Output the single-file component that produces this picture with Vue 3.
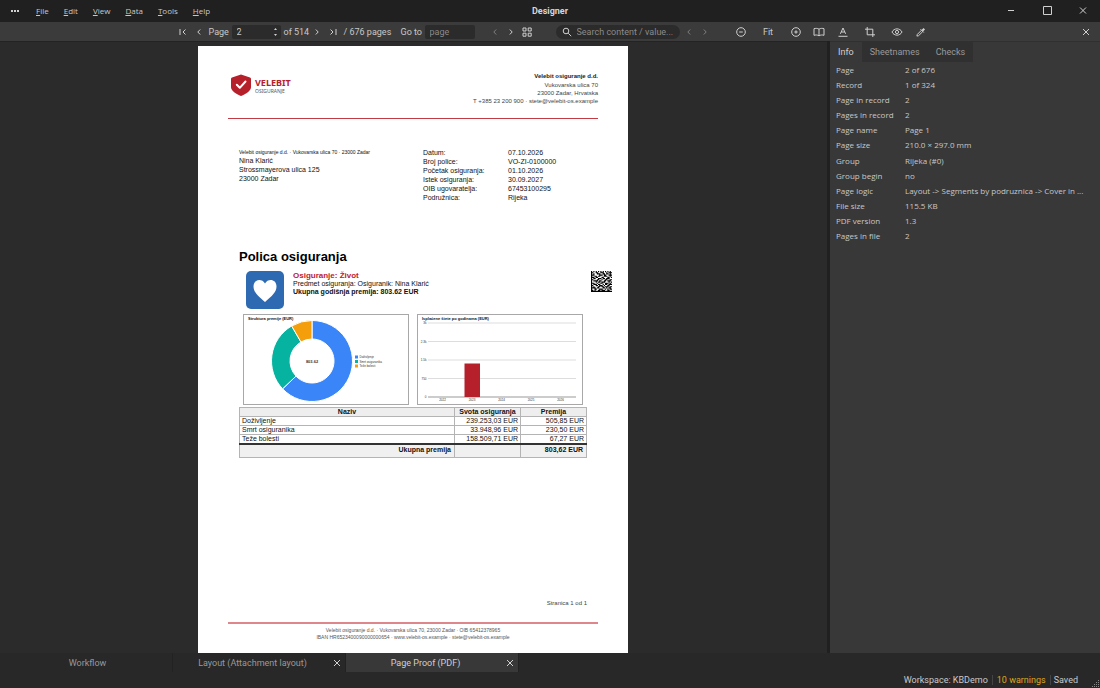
<script setup>
import { ref } from 'vue'

const menus = ['File', 'Edit', 'View', 'Data', 'Tools', 'Help']
const page = ref('2')
const goto = ref('')
const query = ref('')

const sideTabs = ['Info', 'Sheetnames', 'Checks']
const info = [
  ['Page', '2 of 676'],
  ['Record', '1 of 324'],
  ['Page in record', '2'],
  ['Pages in record', '2'],
  ['Page name', 'Page 1'],
  ['Page size', '210.0 × 297.0 mm'],
  ['Group', 'Rijeka (#0)'],
  ['Group begin', 'no'],
  ['Page logic', 'Layout -> Segments by podruznica -> Cover in ...'],
  ['File size', '115.5 KB'],
  ['PDF version', '1.3'],
  ['Pages in file', '2'],
]

const details = [
  ['Datum:', '07.10.2026'],
  ['Broj police:', 'VO-ZI-0100000'],
  ['Početak osiguranja:', '01.10.2026'],
  ['Istek osiguranja:', '30.09.2027'],
  ['OIB ugovaratelja:', '67453100295'],
  ['Podružnica:', 'Rijeka'],
]

const items = [
  ['Doživljenje', '239.253,03 EUR', '505,85 EUR'],
  ['Smrt osiguranika', '33.948,96 EUR', '230,50 EUR'],
  ['Teže bolesti', '158.509,71 EUR', '67,27 EUR'],
]

const parts = [
  { label: 'Doživljenje', value: 505.85, color: '#3a86f8' },
  { label: 'Smrt osiguranika', value: 230.5, color: '#06b2a0' },
  { label: 'Teže bolesti', value: 67.27, color: '#f59e0b' },
]
const total = parts.reduce((s, p) => s + p.value, 0)
let turn = 0
const slices = parts.map((p) => {
  const a = turn * 2 * Math.PI
  turn += p.value / total
  const b = turn * 2 * Math.PI
  const pt = (r, t) => `${(69 + r * Math.sin(t)).toFixed(2)} ${(47 - r * Math.cos(t)).toFixed(2)}`
  const large = b - a > Math.PI ? 1 : 0
  return {
    color: p.color,
    d: `M${pt(40.5, a)}A40.5 40.5 0 ${large} 1 ${pt(40.5, b)}L${pt(22, b)}A22 22 0 ${large} 0 ${pt(22, a)}Z`,
  }
})

const yTicks = ['3k', '2.3k', '1.5k', '750', '0']
const years = ['2022', '2023', '2024', '2025', '2026']

const code = [
  '101010101010101010',
  '110011001110010111',
  '101001110011011010',
  '111000011101100111',
  '100110110001110010',
  '111011000110001101',
  '101100111011011100',
  '110001100100110011',
  '101111011001101110',
  '100010110111000101',
  '111001001100111010',
  '101110110010110111',
  '110011011101001100',
  '101000110110111011',
  '111101100011010110',
  '100110011100101011',
  '110100110111001100',
  '111111111111111111',
]
const modules = code
  .flatMap((row, y) => [...row].map((c, x) => (c === '1' ? `M${x} ${y}h1v1h-1z` : '')))
  .join('')
</script>

<template>
  <div class="app">
    <header class="titlebar">
      <nav class="menu">
        <button class="dots" aria-label="More">
          <svg width="10" height="4" viewBox="0 0 10 4"><path d="M1 1h2v2H1zM4 1h2v2H4zM7 1h2v2H7z" fill="#d0d0d0" /></svg>
        </button>
        <button v-for="m in menus" :key="m"><u>{{ m[0] }}</u>{{ m.slice(1) }}</button>
      </nav>
      <h1>Designer</h1>
      <div class="winbtns">
        <button aria-label="Minimize"><svg width="10" height="10" viewBox="0 0 10 10"><path d="M2 4.500h6" /></svg></button>
        <button aria-label="Maximize"><svg width="10" height="10" viewBox="0 0 10 10"><path d="M1.500 0.500h8v8h-8z" /></svg></button>
        <button aria-label="Close"><svg width="10" height="10" viewBox="0 0 10 10"><path d="M2 1.500l6 6M8 1.500L2 7.500" /></svg></button>
      </div>
    </header>

    <div class="toolbar">
      <div class="tools">
        <div class="group pager">
          <button class="ib" aria-label="First page"><svg class="ic" viewBox="0 0 12 12"><path d="M3 3v6M8.500 3.500L6 6l2.500 2.500" /></svg></button>
          <button class="ib" aria-label="Previous page"><svg class="ic" viewBox="0 0 12 12"><path d="M7.200 3.500L4.800 6l2.400 2.500" /></svg></button>
          <label for="page" class="w-page">Page</label>
          <div class="spin">
            <input id="page" v-model="page" type="text" />
            <div class="arrows">
              <button aria-label="Up"><svg width="5" height="4" viewBox="0 0 5 4"><path d="M1 3L2.500 1L4 3z" /></svg></button>
              <button aria-label="Down"><svg width="5" height="4" viewBox="0 0 5 4"><path d="M1 1L2.500 3L4 1z" /></svg></button>
            </div>
          </div>
          <span class="w-of">of 514</span>
          <button class="ib" aria-label="Next page"><svg class="ic" viewBox="0 0 12 12"><path d="M4.800 3.500L7.200 6 4.800 8.500" /></svg></button>
          <button class="ib" aria-label="Last page"><svg class="ic" viewBox="0 0 12 12"><path d="M9 3v6M3.500 3.500L6 6 3.500 8.500" /></svg></button>
          <span class="w-pages">/ 676 pages</span>
        </div>
        <div class="group goto">
          <label for="goto">Go to</label>
          <input id="goto" v-model="goto" type="text" placeholder="page" />
        </div>
        <div class="group">
          <button class="ib dim" aria-label="Back"><svg class="ic" viewBox="0 0 12 12"><path d="M7.200 3.500L4.800 6l2.400 2.500" /></svg></button>
          <button class="ib" aria-label="Forward"><svg class="ic" viewBox="0 0 12 12"><path d="M4.800 3.500L7.200 6 4.800 8.500" /></svg></button>
          <button class="ib" aria-label="Thumbnails"><svg class="ic" viewBox="0 0 12 12"><path d="M2 2h3v3H2zM7.200 2h3v3h-3zM2 7.200h3v3H2zM7.200 7.200h3v3h-3z" /></svg></button>
        </div>
        <div class="group find">
          <div class="search">
            <svg class="ic" viewBox="0 0 12 12"><circle cx="5" cy="5" r="2.800" /><path d="M7.200 7.200L10.200 10.200" /></svg>
            <input v-model="query" type="text" aria-label="Search" placeholder="Search content / value..." />
          </div>
          <button class="ib dim" aria-label="Previous match"><svg class="ic" viewBox="0 0 12 12"><path d="M7.200 3.500L4.800 6l2.400 2.500" /></svg></button>
          <button class="ib dim" aria-label="Next match"><svg class="ic" viewBox="0 0 12 12"><path d="M4.800 3.500L7.200 6 4.800 8.500" /></svg></button>
        </div>
        <div class="group zoom">
          <button class="ib" aria-label="Zoom out"><svg class="ic" viewBox="0 0 12 12"><circle cx="6" cy="6" r="4.300" /><path d="M4.200 6h3.600" /></svg></button>
          <button class="fit">Fit</button>
          <button class="ib" aria-label="Zoom in"><svg class="ic" viewBox="0 0 12 12"><circle cx="6" cy="6" r="4.300" /><path d="M4.300 6h3.400M6 4.300v3.400" /></svg></button>
        </div>
        <div class="group modes">
          <button class="ib" aria-label="Facing pages"><svg class="ic" viewBox="0 0 12 12"><path d="M6 3.200C4.500 2.200 2.500 2.200 1 2.700v6.600c1.500-.5 3.500-.5 5 .5 1.500-1 3.500-1 5-.5V2.700c-1.500-.5-3.500-.5-5 .5v6.600" /></svg></button>
          <button class="ib" aria-label="Text colour"><svg class="ic" viewBox="0 0 12 12"><path d="M3.400 7.800L6 2l2.600 5.800M4.300 6h3.400M1.500 10.300h9" /></svg></button>
        </div>
        <div class="group marks">
          <button class="ib" aria-label="Crop"><svg class="ic" viewBox="0 0 12 12"><path d="M3.200 1v7.800H11M1 3.200h7.800V11" /></svg></button>
          <button class="ib" aria-label="Preview"><svg class="ic" viewBox="0 0 12 12"><path d="M1 6c2-4.200 8-4.200 10 0-2 4.200-8 4.200-10 0z" /><circle cx="6" cy="6" r="1.600" /></svg></button>
        </div>
        <button class="ib" aria-label="Pick colour"><svg class="ic" viewBox="0 0 12 12"><path d="M6.500 4.200L2.300 8.400 1.900 10.100 3.600 9.700 7.800 5.500" /><path d="M5.500 3.200l3.300 3.300" /><path d="M7.300 4.700l2-2" class="thick" /></svg></button>
      </div>
      <button class="ib close" aria-label="Close proof"><svg width="10" height="10" viewBox="0 0 10 10"><path d="M2 2l6 6M8 2L2 8" /></svg></button>
    </div>

    <main class="work">
      <section class="canvas">
        <article class="sheet">
          <header class="letterhead">
            <div class="brand">
              <svg width="20" height="22" viewBox="0 0 20 22">
                <path d="M10 0.500L19 3.600Q20 4 20 5v8c0 4-5 7-10 9C5 20 0 17 0 13V5q0-1 1-1.400z" fill="#b5202b" />
                <path d="M5.800 10.800l3 3L14.500 7.500" fill="none" stroke="#fff" stroke-width="2" stroke-linecap="round" stroke-linejoin="round" />
              </svg>
              <div>
                <strong>VELEBIT</strong>
                <span>OSIGURANJE</span>
              </div>
            </div>
            <address>
              <strong>Velebit osiguranje d.d.</strong>
              Vukovarska ulica 70<br />
              23000 Zadar, Hrvatska<br />
              T +385 23 200 900 · stete@velebit-os.example
            </address>
          </header>

          <div class="parties">
            <div class="to">
              <small>Velebit osiguranje d.d. · Vukovarska ulica 70 · 23000 Zadar</small>
              <p>Nina Klarić<br />Strossmayerova ulica 125<br />23000 Zadar</p>
            </div>
            <dl>
              <template v-for="d in details" :key="d[0]">
                <dt>{{ d[0] }}</dt>
                <dd>{{ d[1] }}</dd>
              </template>
            </dl>
          </div>

          <h2>Polica osiguranja</h2>
          <div class="cover">
            <svg width="38" height="38" viewBox="0 0 38 38">
              <rect width="38" height="38" rx="5" fill="#2d6ab1" />
              <path d="M19 31C12 25 7.500 21 7.500 15.500C7.500 8 16 7 19 12.500C22 7 30.500 8 30.500 15.500C30.500 21 26 25 19 31z" fill="#fff" />
            </svg>
            <div class="about">
              <h3>Osiguranje: Život</h3>
              <p>Predmet osiguranja: Osiguranik: Nina Klarić</p>
              <p><b>Ukupna godišnja premija: 803.62 EUR</b></p>
            </div>
            <svg class="matrix" width="21" height="21" viewBox="0 0 18 18"><path :d="modules" fill="#000" /></svg>
          </div>

          <div class="charts">
            <svg class="chart" viewBox="0 0 166 91">
              <rect x="0.500" y="0.500" width="165" height="90" fill="#fff" stroke="#a8a8a8" />
              <text x="5" y="5.500" class="ct">Struktura premije (EUR)</text>
              <path v-for="s in slices" :key="s.color" :d="s.d" :fill="s.color" stroke="#fff" stroke-width="1" />
              <text x="69" y="48.500" class="mid">803.62</text>
              <g v-for="(p, i) in parts" :key="p.label">
                <rect x="112" :y="41.500 + i * 4.500" width="3" height="3" :fill="p.color" />
                <text x="116.500" :y="44 + i * 4.500" class="cl">{{ p.label }}</text>
              </g>
            </svg>
            <svg class="chart" viewBox="0 0 166 91">
              <rect x="0.500" y="0.500" width="165" height="90" fill="#fff" stroke="#a8a8a8" />
              <text x="5" y="5.500" class="ct">Isplaćene štete po godinama (EUR)</text>
              <g v-for="(t, i) in yTicks" :key="t">
                <path :d="`M11 ${9 + i * 18.500}h148`" :stroke="i === 4 ? '#999' : '#ddd'" stroke-width="1" />
                <text x="9.500" :y="10 + i * 18.500" class="cl end">{{ t }}</text>
              </g>
              <rect x="47.500" y="49.500" width="15.500" height="33.500" fill="#b5202b" />
              <text v-for="(y, i) in years" :key="y" :x="25.500 + i * 29.500" y="86.500" class="cl center">{{ y }}</text>
            </svg>
          </div>

          <table class="premium">
            <thead>
              <tr><th>Naziv</th><th class="sum">Svota osiguranja</th><th class="prem">Premija</th></tr>
            </thead>
            <tbody>
              <tr v-for="r in items" :key="r[0]"><td>{{ r[0] }}</td><td>{{ r[1] }}</td><td>{{ r[2] }}</td></tr>
            </tbody>
            <tfoot>
              <tr><td>Ukupna premija</td><td></td><td>803,62 EUR</td></tr>
            </tfoot>
          </table>

          <p class="pageno">Stranica 1 od 1</p>
          <footer class="legal">
            Velebit osiguranje d.d. · Vukovarska ulica 70, 23000 Zadar · OIB 65412378965<br />
            IBAN HR6523400090000000654 · www.velebit-os.example · stete@velebit-os.example
          </footer>
        </article>
      </section>

      <aside class="side">
        <div class="sidetabs">
          <button v-for="(t, i) in sideTabs" :key="t" :class="{ on: i === 0 }">{{ t }}</button>
        </div>
        <table class="info">
          <tbody>
            <tr v-for="r in info" :key="r[0]"><th>{{ r[0] }}</th><td>{{ r[1] }}</td></tr>
          </tbody>
        </table>
      </aside>
    </main>

    <div class="tabs">
      <div class="tab"><button class="name">Workflow</button></div>
      <div class="tab">
        <button class="name">Layout (Attachment layout)</button>
        <button class="x" aria-label="Close tab"><svg width="10" height="10" viewBox="0 0 10 10"><path d="M2 2l6 6M8 2L2 8" /></svg></button>
      </div>
      <div class="tab on">
        <button class="name">Page Proof (PDF)</button>
        <button class="x" aria-label="Close tab"><svg width="10" height="10" viewBox="0 0 10 10"><path d="M2 2l6 6M8 2L2 8" /></svg></button>
      </div>
    </div>

    <footer class="status">
      <span>Workspace: KBDemo</span>
      <a href="#warnings">10 warnings</a>
      <span class="saved">Saved</span>
      <svg class="grip" width="8" height="8" viewBox="0 0 8 8"><path d="M6 0h1v1H6zM4 2h1v1H4zM6 2h1v1H6zM2 4h1v1H2zM4 4h1v1H4zM6 4h1v1H6zM0 6h1v1H0zM2 6h1v1H2zM4 6h1v1H4zM6 6h1v1H6z" fill="#8a8a8a" /></svg>
    </footer>
  </div>
</template>

<style>
body {
  background: #282828;
}
</style>

<style scoped>
.app {
  display: flex;
  flex-direction: column;
  height: 100vh;
  overflow: hidden;
  color: #c8c8c8;
  background: #282828;
  font: 9px/12px Roboto, sans-serif;
}
.app * {
  box-sizing: border-box;
}
button,
input {
  margin: 0;
  padding: 0;
  border: 0;
  background: none;
  color: inherit;
  font: inherit;
  outline: none;
}
button,
label,
span {
  white-space: nowrap;
}
svg {
  display: block;
  flex: none;
}
.titlebar svg path,
.toolbar svg,
.tabs svg {
  stroke: #d0d0d0;
  fill: none;
}
.titlebar {
  display: grid;
  grid-template-columns: 1fr auto 1fr;
  align-items: center;
  height: 22px;
  flex: none;
  background: #202020;
}
.menu {
  display: flex;
  gap: 15px;
  padding-left: 10px;
  font: 8px/12px "Open Sans", sans-serif;
}
.menu .dots {
  margin-right: 1px;
}
.titlebar .dots path {
  stroke: none;
  fill: #d0d0d0;
}
.menu u {
  text-underline-offset: 1px;
}
h1 {
  margin: 0;
  font-size: 9px;
  font-weight: 700;
  line-height: 12px;
  color: #d6d6d6;
}
.winbtns {
  display: flex;
  justify-content: flex-end;
  gap: 26px;
  padding-right: 12px;
}
.toolbar {
  display: grid;
  grid-template-columns: 1fr auto 1fr;
  align-items: center;
  height: 19px;
  flex: none;
  padding-left: 3px;
  background: #3b3b3b;
}
.tools {
  grid-column: 2;
  display: flex;
  align-items: center;
}
.group {
  display: flex;
  align-items: center;
}
.ib {
  display: flex;
  justify-content: center;
  width: 16px;
}
.ic {
  width: 12px;
  height: 12px;
  stroke-width: 1;
}
.thick {
  stroke-width: 2;
}
.dim {
  opacity: 0.45;
}
.close {
  justify-self: end;
  margin-right: 6px;
}
.w-page {
  width: 25px;
  padding-left: 2px;
}
.spin {
  display: flex;
  width: 49px;
  height: 14px;
  background: #2b2b2b;
  border-radius: 2px;
}
.spin input {
  flex: 1;
  min-width: 0;
  padding-left: 5px;
}
.arrows {
  display: flex;
  flex-direction: column;
  justify-content: space-evenly;
  width: 8px;
}
.toolbar .arrows svg {
  fill: #d0d0d0;
  stroke: none;
}
.w-of {
  width: 28px;
  padding-left: 3px;
}
.w-pages {
  width: 60px;
  padding-left: 3px;
}
.goto label {
  width: 24px;
}
.goto input {
  width: 50px;
  height: 14px;
  margin-right: 12px;
  padding-left: 5px;
  background: #2b2b2b;
  border-radius: 2px;
}
input::placeholder {
  color: #8a8a8a;
  opacity: 1;
}
.find {
  margin-left: 21px;
}
.search {
  display: flex;
  align-items: center;
  gap: 4px;
  width: 124px;
  height: 14px;
  margin-right: 1px;
  padding-left: 5px;
  background: #2b2b2b;
  border-radius: 7px;
}
.search input {
  flex: 1;
  min-width: 0;
}
.zoom {
  gap: 8px;
  margin-left: 20px;
}
.fit {
  width: 23px;
}
.modes {
  gap: 8px;
  margin-left: 7px;
}
.marks {
  gap: 11px;
  margin: 0 8px 0 11px;
}
.work {
  display: grid;
  grid-template-columns: 1fr 273px;
  flex: 1;
  min-height: 0;
}
.canvas {
  display: flex;
  justify-content: center;
  padding: 4px 1px 0 0;
  overflow: hidden;
  border-top: 1px solid #232323;
  background: #2b2b2b;
}
.sheet {
  width: 430px;
  padding: 0 30px;
  background: #fff;
  color: #111;
  font: 7px/9px "Liberation Sans", Arial, sans-serif;
}
.letterhead {
  display: flex;
  justify-content: space-between;
  height: 73px;
  padding-top: 26px;
  border-bottom: 1px solid #c23a43;
}
.brand {
  display: flex;
  gap: 4px;
  padding: 2px 0 0 3px;
}
.brand div {
  padding-top: 4px;
}
.brand strong {
  display: block;
  font: bold 9px/9px "Noto Sans", sans-serif;
  color: #b5202b;
}
.brand span {
  display: block;
  font: 5px/8px "Noto Sans", sans-serif;
  color: #555;
}
address {
  font: 6px/8px "Liberation Sans", Arial, sans-serif;
  text-align: right;
  color: #444;
}
address strong {
  display: block;
  line-height: 9px;
  color: #222;
}
.parties {
  display: flex;
  justify-content: space-between;
  padding: 29px 39px 0 11px;
}
.to small {
  display: block;
  font-size: 5px;
  line-height: 8px;
}
.parties p {
  margin: 0;
}
.parties dl {
  display: grid;
  grid-template-columns: 85px 1fr;
  margin: 0;
  line-height: 9px;
  width: 136px;
}
.parties dd {
  margin: 0;
}
h2 {
  margin: 46px 0 0 11px;
  font: bold 13px/18px "Liberation Sans", Arial, sans-serif;
  color: #000;
}
.cover {
  display: flex;
  padding: 5px 0 0 18px;
  margin-right: -14px;
}
.about {
  flex: 1;
  padding-left: 9px;
}
.about h3 {
  margin: 0;
  font: bold 8px/9px "Liberation Sans", Arial, sans-serif;
  color: #c0202c;
}
.about p {
  margin: 0;
  font-size: 7px;
  line-height: 8px;
}
.charts {
  display: flex;
  gap: 8px;
  padding: 5px 0 0 15px;
}
.chart {
  width: 166px;
}
.chart text {
  font: 3px "Liberation Sans", Arial, sans-serif;
  fill: #333;
}
.chart .ct {
  font: bold 4px "Liberation Sans", Arial, sans-serif;
  fill: #111;
}
.chart .mid {
  font: bold 4px "Liberation Sans", Arial, sans-serif;
  text-anchor: middle;
}
.chart .end {
  text-anchor: end;
}
.chart .center {
  text-anchor: middle;
}
.premium {
  width: 348px;
  margin: 2px 0 0 11px;
  border-collapse: collapse;
  table-layout: fixed;
}
.premium th,
.premium td {
  padding: 0 2px;
  border: 1px solid #b4b4b4;
  line-height: 8px;
  text-align: right;
}
.premium th {
  text-align: center;
  background: #eee;
}
.premium .sum,
.premium .prem {
  width: 66px;
}
.premium td:first-child {
  text-align: left;
}
.premium tfoot td {
  padding: 0 3px 2px;
  border-top: 2px solid #333;
  background: #f0f0f0;
  font-weight: bold;
  line-height: 10px;
}
.premium tfoot td:first-child {
  text-align: right;
}
.pageno {
  margin: 141px 11px 0 0;
  font-size: 6px;
  text-align: right;
  color: #444;
}
.legal {
  margin-top: 14px;
  padding-top: 3px;
  border-top: 2px solid #de868b;
  font-size: 5px;
  line-height: 7px;
  text-align: center;
  color: #555;
}
.side {
  border-left: 3px solid #202020;
  background: #383838;
}
.sidetabs {
  display: flex;
  height: 21px;
  border-top: 1px solid #303030;
}
.sidetabs button {
  padding: 0 8px;
  background: #303030;
  color: #999;
}
.sidetabs .on {
  background: #383838;
  color: #d0d0d0;
}
.info {
  width: 100%;
  height: 182px;
  border-collapse: collapse;
  font: 8px/12px "Open Sans", sans-serif;
}
.info th {
  width: 75px;
  padding: 0 0 0 6px;
  font-weight: 400;
  text-align: left;
}
.info td {
  padding: 0;
  white-space: nowrap;
}
.tabs {
  display: flex;
  height: 19px;
  flex: none;
}
.tab {
  display: flex;
  align-items: center;
  width: 173px;
  padding-left: 3px;
  border-right: 1px solid #222;
  color: #999;
}
.tab.on {
  background: #383838;
  color: #d0d0d0;
}
.tab .name {
  flex: 1;
}
.tab .x {
  display: flex;
  justify-content: center;
  width: 16px;
}
.status {
  display: flex;
  align-items: center;
  justify-content: flex-end;
  height: 16px;
  flex: none;
}
.status a {
  margin-left: 4px;
  padding: 0 4px;
  border: solid #444;
  border-width: 0 1px;
  color: #dca81c;
  text-decoration: none;
  line-height: 10px;
}
.saved {
  padding: 0 14px 0 3px;
}
.grip {
  align-self: flex-end;
}
</style>
